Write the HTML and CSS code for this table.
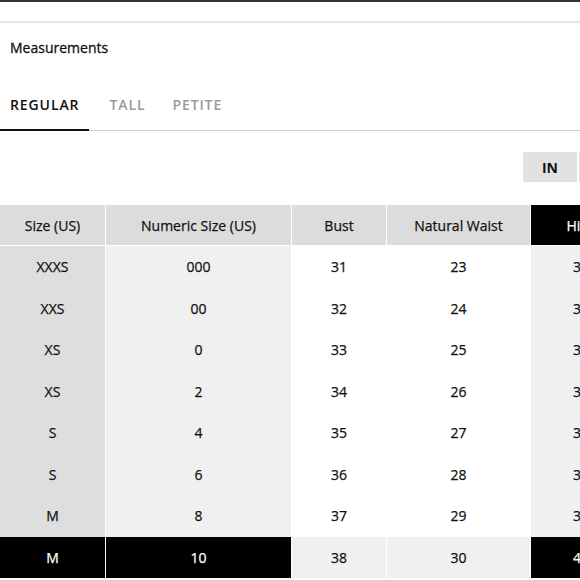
FILE: index.html
```html
<!DOCTYPE html>
<html>
<head>
<meta charset="utf-8">
<link rel="stylesheet" href="styles.css">
</head>
<body>
<div class="page">
  <div class="topbar"></div>
  <div class="divider"></div>
  <h2 class="title">Measurements</h2>
  <div class="tabs">
    <div class="tab active">REGULAR</div>
    <div class="tab tall">TALL</div>
    <div class="tab petite">PETITE</div>
  </div>
  <div class="units">
    <button class="unit active">IN</button>
    <button class="unit">CM</button>
  </div>
  <div class="chart">
    <div class="cell head">Size (US)</div>
    <div class="cell head">Numeric Size (US)</div>
    <div class="cell head">Bust</div>
    <div class="cell head">Natural Waist</div>
    <div class="cell head dark">Hips</div>

    <div class="cell c1">XXXS</div><div class="cell c2">000</div><div class="cell">31</div><div class="cell">23</div><div class="cell c2">33</div>
    <div class="cell c1">XXS</div><div class="cell c2">00</div><div class="cell">32</div><div class="cell">24</div><div class="cell c2">34</div>
    <div class="cell c1">XS</div><div class="cell c2">0</div><div class="cell">33</div><div class="cell">25</div><div class="cell c2">35</div>
    <div class="cell c1">XS</div><div class="cell c2">2</div><div class="cell">34</div><div class="cell">26</div><div class="cell c2">36</div>
    <div class="cell c1">S</div><div class="cell c2">4</div><div class="cell">35</div><div class="cell">27</div><div class="cell c2">37</div>
    <div class="cell c1">S</div><div class="cell c2">6</div><div class="cell">36</div><div class="cell">28</div><div class="cell c2">38</div>
    <div class="cell c1">M</div><div class="cell c2">8</div><div class="cell">37</div><div class="cell">29</div><div class="cell c2">39</div>
    <div class="cell dark">M</div><div class="cell dark">10</div><div class="cell c2">38</div><div class="cell c2">30</div><div class="cell dark">40</div>
  </div>
</div>
</body>
</html>
```
FILE: styles.css
```css
html, body {
  margin: 0;
  padding: 0;
  background: #fff;
  overflow: hidden;
}
body {
  width: 580px;
  height: 580px;
  font-family: "Open Sans", "Noto Sans", sans-serif;
  color: #222;
}
.page {
  width: 640px;
}
.topbar {
  height: 2px;
  background: #333;
  width: 580px;
}
.divider {
  height: 2px;
  background: #e6e6e6;
  margin-top: 19px;
  width: 580px;
}
.title {
  margin: 15px 0 0 10px;
  font-size: 14px;
  font-weight: 400;
  line-height: 20px;
  color: #111;
  -webkit-text-stroke: 0.3px #111;
}
.tabs {
  display: flex;
  margin-top: 37px;
  width: 580px;
  border-bottom: 1px solid #cfcfcf;
}
.tab {
  padding: 0 0 14px 0;
  font-size: 14px;
  font-weight: 600;
  letter-spacing: 0.9px;
  line-height: 20px;
  color: #9a9a9a;
  border-bottom: 2px solid transparent;
  margin-bottom: -1px;
}
.tab.active {
  color: #111;
  border-bottom-color: #111;
  padding: 0 10px 14px 10px;
}
.tab.tall {
  margin-left: 20px;
}
.tab.petite {
  margin-left: 27px;
}
.units {
  display: flex;
  gap: 2px;
  margin: 21px 0 0 523px;
}
.unit {
  width: 54px;
  height: 30px;
  border: 0;
  background: #e2e2e2;
  font-family: "Open Sans", "Noto Sans", sans-serif;
  font-size: 14px;
  font-weight: 700;
  color: #111;
  padding: 0;
}
.chart {
  display: grid;
  grid-template-columns: 105px 185px 94px 143px 100px;
  grid-template-rows: 41px;
  grid-auto-rows: 41.5px;
  column-gap: 1px;
  background: #fff;
  margin-top: 23px;
}
.cell {
  display: flex;
  align-items: center;
  justify-content: center;
  font-size: 14px;
  color: #111;
  background: #fff;
  -webkit-text-stroke: 0.25px #111;
}
.cell.head {
  background: #dcdcdc;
  margin-bottom: 1px;
}
.cell.c1 {
  background: #dedede;
}
.cell.c2 {
  background: #f0f0f0;
}
.cell.dark {
  background: #000;
  color: #fff;
  -webkit-text-stroke: 0.25px #fff;
}
```
